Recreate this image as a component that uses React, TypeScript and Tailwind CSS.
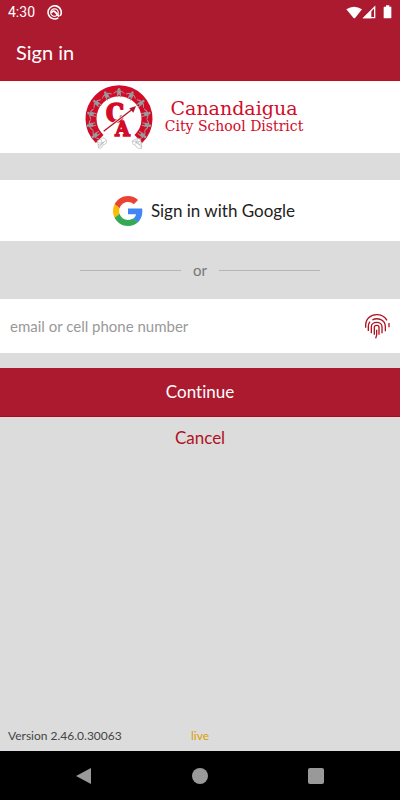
function StatusBar() {
  return (
    <div className="flex h-6 items-center px-2 text-white">
      <span className="font-['Roboto',sans-serif] text-sm leading-6">4:30</span>
      <svg className="ml-3 size-[15px]" viewBox="0 0 48 48" fill="none" stroke="currentColor" aria-hidden="true">
        <path d="M36 41A21 21 0 1 1 42 35" strokeWidth="5" />
        <circle cx="24" cy="24" r="12" strokeWidth="4" />
        <path d="M14 25c3-6 8-7 12-3l13 15" strokeWidth="6" />
      </svg>
      <svg className="ml-auto h-4 w-12" viewBox="0 0 144 48" aria-hidden="true">
        <path d="M7 16Q30 1 54 16L34 41Q31 44 28 41Z" fill="currentColor" />
        <path d="M60 41L92 9V41Z" fill="none" stroke="currentColor" strokeWidth="4" />
        <path d="M57 43L82 18V43Z" fill="currentColor" />
        <path d="M121 8h5V4h10v4h6v33q0 2-2 2h-19q-2 0-2-2V10q0-2 2-2Z" fill="currentColor" />
      </svg>
    </div>
  );
}

const figures = [
  [44, 162, -125],
  [30, 132, -102],
  [32, 99, -76],
  [48, 67, -50],
  [77, 44, -26],
  [114, 35, 0],
  [150, 44, 26],
  [179, 67, 50],
  [195, 99, 76],
  [197, 132, 102],
  [184, 162, 125],
];

function Crest() {
  return (
    <svg className="h-[72px] w-20 shrink-0" viewBox="0 0 240 216" role="img" aria-label="CA crest">
      <path d="M56 174A84 84 0 1 1 172 174" fill="none" stroke="#d20c28" strokeWidth="33" />
      {figures.map(([x, y, angle]) => (
        <g key={`${x}-${y}`} transform={`translate(${x} ${y}) rotate(${angle})`} fill="none" stroke="#999b9e">
          <circle cx="0" cy="-10" r="4" fill="#999b9e" stroke="none" />
          <path d="M-16 2L-8 -4H8L16 2" strokeWidth="3" />
          <path d="M-5 -6H5V5H-5Z" fill="#999b9e" strokeWidth="2" />
          <path d="M-4 4V14M4 4V14" strokeWidth="3" />
        </g>
      ))}
      <g fill="#ffffff" stroke="#b4b5b8" strokeWidth="2">
        <path d="M49 179l9 -3 3 -6 9 2 7 6 -2 10 -9 4 -4 8 -9 2Z" />
        <path d="M51 183q12 9 25 -6M51 190q11 6 18 -8M53 197q7 2 10 -12M59 174l7 16" fill="none" />
        <path d="M179 176l-9 -4 -8 3 -9 6 3 9 8 4 5 7 13 2Z" />
        <path d="M179 180q-12 9 -25 0M183 188q-14 7 -20 -10M184 196q-10 2 -14 -16M170 172l-6 19" fill="none" />
      </g>
      <text fontFamily="'DejaVu Serif Condensed', 'DejaVu Serif', serif" fontWeight="700" fill="#d20c28" stroke="#d20c28" strokeWidth="5">
        <tspan x="75" y="122" fontSize="76">C</tspan>
        <tspan x="103" y="164" fontSize="62">A</tspan>
      </text>
      <path d="M68 151L156 83" stroke="#ffffff" strokeWidth="8" />
      <path d="M68 151L156 83" stroke="#b51529" strokeWidth="4" />
      <path d="M165 75L145 82L157 95Z" fill="#b51529" />
    </svg>
  );
}

function GoogleLogo() {
  return (
    <svg className="size-[30px] shrink-0" viewBox="0 0 48 48" aria-hidden="true">
      <path fill="#EA4335" d="M24 9.5c3.54 0 6.71 1.22 9.21 3.6l6.85-6.85C35.9 2.38 30.47 0 24 0 14.62 0 6.51 5.38 2.56 13.22l7.98 6.19C12.43 13.72 17.74 9.5 24 9.5z" />
      <path fill="#4285F4" d="M46.98 24.55c0-1.57-.15-3.09-.38-4.55H24v9.02h12.94c-.58 2.96-2.26 5.48-4.78 7.18l7.73 6c4.51-4.18 7.09-10.36 7.09-17.65z" />
      <path fill="#FBBC05" d="M10.53 28.59c-.48-1.45-.76-2.99-.76-4.59s.27-3.14.76-4.59l-7.98-6.19C.92 16.46 0 20.12 0 24c0 3.88.92 7.54 2.56 10.78l7.97-6.19z" />
      <path fill="#34A853" d="M24 48c6.48 0 11.93-2.13 15.89-5.81l-7.73-6c-2.15 1.45-4.92 2.3-8.16 2.3-6.26 0-11.57-4.22-13.47-9.91l-7.98 6.19C6.51 42.62 14.62 48 24 48z" />
    </svg>
  );
}

function Fingerprint() {
  return (
    <svg className="size-[26px]" viewBox="13 14 78 78" fill="none" stroke="#b1121f" strokeWidth="4" aria-hidden="true">
      <path d="M18 58V51C18 31 33 19 51 19C65 19 75 25 82 36" />
      <path d="M88 44V57" />
      <path d="M26 68V53C26 47 28 43 31 40" />
      <path d="M38 35C54 26 77 35 77 55V69" />
      <path d="M35 75V55C35 38 67 38 67 55V75" />
      <path d="M44 79V57C44 49 58 49 58 57V79" />
      <path d="M51 64V80L48 90" />
    </svg>
  );
}

export default function App() {
  return (
    <div className="flex min-h-screen flex-col bg-[#dcdcdc] font-['Lato',sans-serif] [font-variant-ligatures:none]">
      <header className="bg-[#ab1a2f] pb-3">
        <StatusBar />
        <h1 className="mt-3 px-4 text-xl leading-8 text-white">Sign in</h1>
      </header>

      <main className="flex flex-1 flex-col">
        <div className="flex items-center justify-center gap-1 border-t border-[#c20a1d] bg-white pr-4">
          <Crest />
          <div className="pb-0.5 text-center font-['DejaVu_Serif',serif] text-[#d20c28]">
            <div className="text-[19px] leading-5">Canandaigua</div>
            <div className="text-sm leading-4">City School District</div>
          </div>
        </div>

        <button type="button" className="mt-[27px] flex h-[61px] items-center justify-center gap-2 bg-white pl-2 text-[17px] text-[#222222]">
          <GoogleLogo />
          Sign in with Google
        </button>

        <div className="mx-20 flex h-[58px] items-center gap-3 text-[15px] text-[#777777]">
          <div className="h-px flex-1 bg-[#b5b5b5]" />
          or
          <div className="h-px flex-1 bg-[#b5b5b5]" />
        </div>

        <div className="flex h-[54px] items-center bg-white pr-2.5">
          <input
            type="text"
            aria-label="email or cell phone number"
            placeholder="email or cell phone number"
            className="h-full min-w-0 flex-1 px-2.5 text-[15px] text-[#222222] outline-none placeholder:text-[#999999]"
          />
          <button type="button" aria-label="Use fingerprint">
            <Fingerprint />
          </button>
        </div>

        <button type="button" className="mt-[15px] h-[49px] border-b border-[#b1081b] bg-[#ab1a2f] text-[17px] text-white">
          Continue
        </button>
        <button type="button" className="h-[42px] text-[17px] text-[#b1121f]">
          Cancel
        </button>
      </main>

      <footer className="grid h-[30px] grid-cols-3 items-center px-2 text-xs text-[#444444]">
        <span>Version 2.46.0.30063</span>
        <span className="text-center text-[#daa000]">live</span>
      </footer>

      <nav className="flex h-[49px] items-center justify-between bg-black px-[76px] text-[#999999]" aria-label="System">
        <button type="button" aria-label="Back">
          <svg className="size-4" viewBox="0 0 16 16" fill="currentColor" aria-hidden="true">
            <path d="M0 8L15 0V16Z" />
          </svg>
        </button>
        <button type="button" aria-label="Home" className="size-4 rounded-full bg-[#999999]" />
        <button type="button" aria-label="Recent apps" className="size-4 rounded-xs bg-[#999999]" />
      </nav>
    </div>
  );
}
